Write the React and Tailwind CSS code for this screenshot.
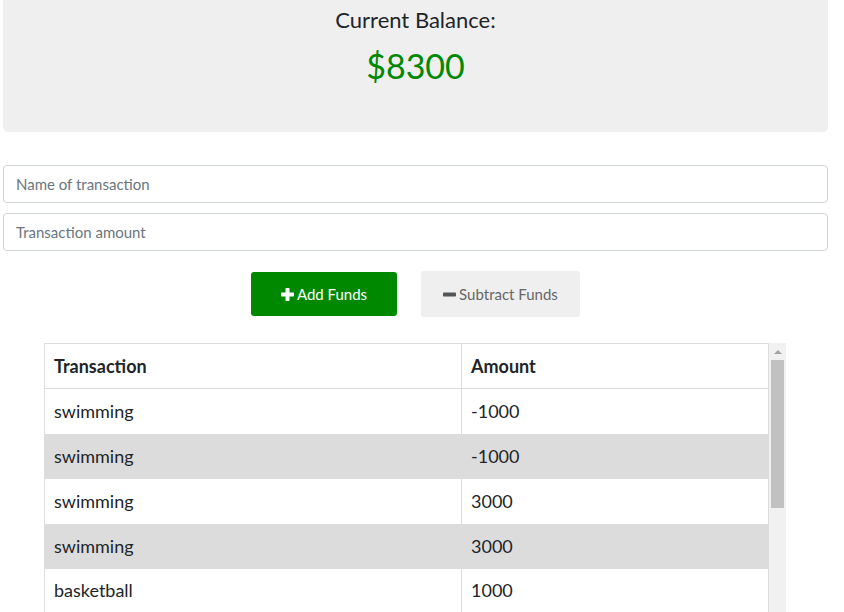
import React, { useState } from 'react';

const initialRows = [
  { name: 'swimming', amount: -1000 },
  { name: 'swimming', amount: -1000 },
  { name: 'swimming', amount: 3000 },
  { name: 'swimming', amount: 3000 },
  { name: 'basketball', amount: 1000 },
];

const PlusIcon = () => (
  <svg width="13" height="13" viewBox="0 0 13 13" className="fill-current">
    <rect x="4.5" y="0" width="4" height="13" rx="0.8" />
    <rect x="0" y="4.5" width="13" height="4" rx="0.8" />
  </svg>
);

const MinusIcon = () => (
  <svg width="13" height="13" viewBox="0 0 13 13" className="fill-current">
    <rect x="0" y="4.5" width="13" height="4" rx="0.8" />
  </svg>
);

const App = () => {
  const [rows] = useState(initialRows);
  const balance = 8300;

  return (
    <div className="h-screen overflow-hidden bg-white text-[#212529]" style={{ fontFamily: 'Lato, "Open Sans", sans-serif' }}>
      <div className="w-[825px] ml-[3px]">
        {/* Balance */}
        <div className="h-[132px] bg-[#efefef] rounded-b-[5px] flex flex-col items-center pt-[6px]">
          <h2 className="text-[22px] leading-[28px]">Current Balance:</h2>
          <p className="text-[34px] leading-[44px] mt-[10px] text-[#008800]">${balance}</p>
        </div>

        {/* Inputs */}
        <div className="mt-[33px] flex flex-col gap-[10px]">
          <input
            placeholder="Name of transaction"
            className="h-[38px] w-full border border-[#ced4da] rounded-[4px] px-[12px] text-[15px] placeholder:text-[#6c757d] outline-none"
          />
          <input
            placeholder="Transaction amount"
            className="h-[38px] w-full border border-[#ced4da] rounded-[4px] px-[12px] text-[15px] placeholder:text-[#6c757d] outline-none"
          />
        </div>

        {/* Buttons */}
        <div className="mt-[20px] h-[46px] flex justify-center items-center gap-[24px]">
          <button className="h-[44px] w-[146px] bg-[#008800] text-white rounded-[3px] flex items-center justify-center gap-[3px] text-[15px]">
            <PlusIcon />
            Add Funds
          </button>
          <button className="h-[46px] w-[159px] bg-[#efefef] text-[#666666] rounded-[3px] flex items-center justify-center gap-[3px] text-[15px]">
            <span className="text-[#555555]"><MinusIcon /></span>
            Subtract Funds
          </button>
        </div>

        {/* Transactions */}
        <div className="mt-[26px] ml-[41px] w-[742px] h-[269px] flex">
          <div className="w-[725px] h-full overflow-hidden">
            <table className="w-[725px] border-collapse border border-[#dddddd] text-[18px]">
              <thead>
                <tr className="h-[45px]">
                  <th className="w-[417px] text-left font-bold px-[9px] border border-[#dddddd]">Transaction</th>
                  <th className="text-left font-bold px-[9px] border border-[#dddddd]">Amount</th>
                </tr>
              </thead>
              <tbody>
                {rows.map((row, index) => (
                  <tr key={index} className={index % 2 === 1 ? 'h-[45px] bg-[#dcdcdc]' : 'h-[45px] bg-white'}>
                    <td className="px-[9px] border-r border-[#dddddd]">{row.name}</td>
                    <td className="px-[9px]">{row.amount}</td>
                  </tr>
                ))}
              </tbody>
            </table>
          </div>
          {/* scrollbar */}
          <div className="w-[17px] h-full bg-[#f1f1f1] flex flex-col items-center">
            <div className="h-[17px] flex items-center justify-center">
              <div className="w-0 h-0 border-l-[4px] border-r-[4px] border-b-[4px] border-l-transparent border-r-transparent border-b-[#a3a3a3]" />
            </div>
            <div className="w-[13px] h-[148px] bg-[#c1c1c1]" />
          </div>
        </div>
      </div>
    </div>
  );
};

export default App;
